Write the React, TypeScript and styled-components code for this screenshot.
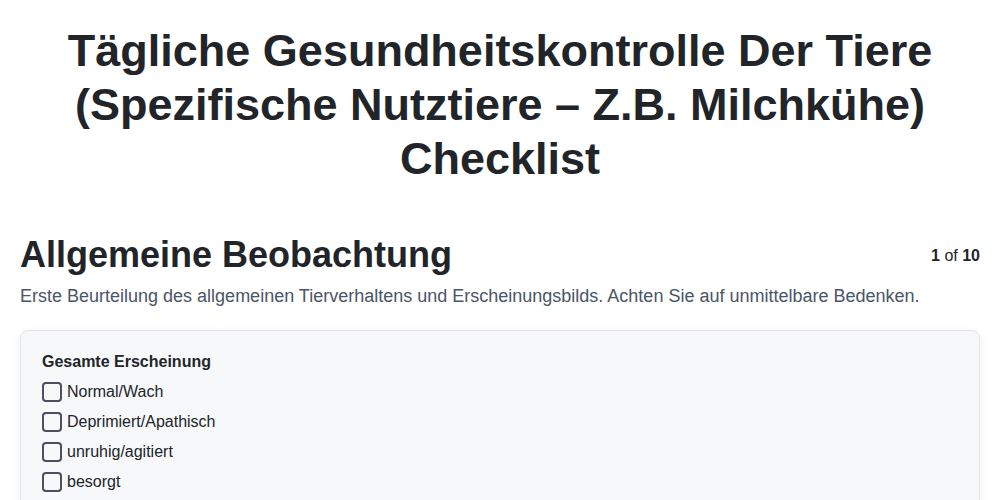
import React from 'react'
import styled, { createGlobalStyle } from 'styled-components'

const GlobalStyle = createGlobalStyle`
  body {
    margin: 0;
    background: #ffffff;
    font-family: "Liberation Sans", Arial, sans-serif;
    color: #212529;
  }
`

const options = ['Normal/Wach', 'Deprimiert/Apathisch', 'unruhig/agitiert', 'besorgt', 'Deutlich krank']

const App = () => {
  return (
    <>
      <GlobalStyle />
      <Page>
        <Title>Tägliche Gesundheitskontrolle Der Tiere (Spezifische Nutztiere – Z.B. Milchkühe) Checklist</Title>
        <SectionHeader>
          <SectionTitle>Allgemeine Beobachtung</SectionTitle>
          <Counter><b>1</b> of <b>10</b></Counter>
        </SectionHeader>
        <Description>
          Erste Beurteilung des allgemeinen Tierverhaltens und Erscheinungsbilds. Achten Sie auf unmittelbare Bedenken.
        </Description>
        <Card>
          <FieldLabel>Gesamte Erscheinung</FieldLabel>
          <OptionList>
            {options.map((o) => (
              <Option key={o}>
                <Box type="checkbox" />
                <span>{o}</span>
              </Option>
            ))}
          </OptionList>
        </Card>
      </Page>
    </>
  )
}

export default App

const Page = styled.div`
  padding: 24px 20px 20px;
`
const Title = styled.h1`
  margin: 0 auto 47px;
  max-width: 900px;
  text-align: center;
  font-size: 45px;
  line-height: 1.2;
  font-weight: 700;
  color: #212529;
`
const SectionHeader = styled.div`
  display: flex;
  justify-content: space-between;
  align-items: center;
`
const SectionTitle = styled.h2`
  margin: 0;
  font-size: 36px;
  line-height: 1.2;
  font-weight: 700;
`
const Counter = styled.div`
  font-size: 16px;
  color: #212529;
  padding-top: 2px;
`
const Description = styled.p`
  margin: 7px 0 20px;
  font-size: 18px;
  line-height: 1.5;
  color: #4a5568;
`
const Card = styled.div`
  background: #f7f8fa;
  border: 1px solid #e3e5eb;
  border-radius: 8px;
  box-shadow: 0 2px 8px rgba(0, 0, 0, 0.06);
  padding: 19px 20px 16px 21px;
`
const FieldLabel = styled.div`
  font-size: 16px;
  line-height: 24px;
  font-weight: 700;
  margin-bottom: 3px;
`
const OptionList = styled.div`
  display: flex;
  flex-direction: column;
`
const Option = styled.label`
  display: flex;
  align-items: center;
  height: 30px;
  font-size: 16px;
  color: #212529;
`
const Box = styled.input`
  appearance: none;
  margin: 0 5px 0 0;
  width: 20px;
  height: 20px;
  border: 2px solid #4b5060;
  border-radius: 4px;
  background: transparent;
  box-sizing: border-box;
`
